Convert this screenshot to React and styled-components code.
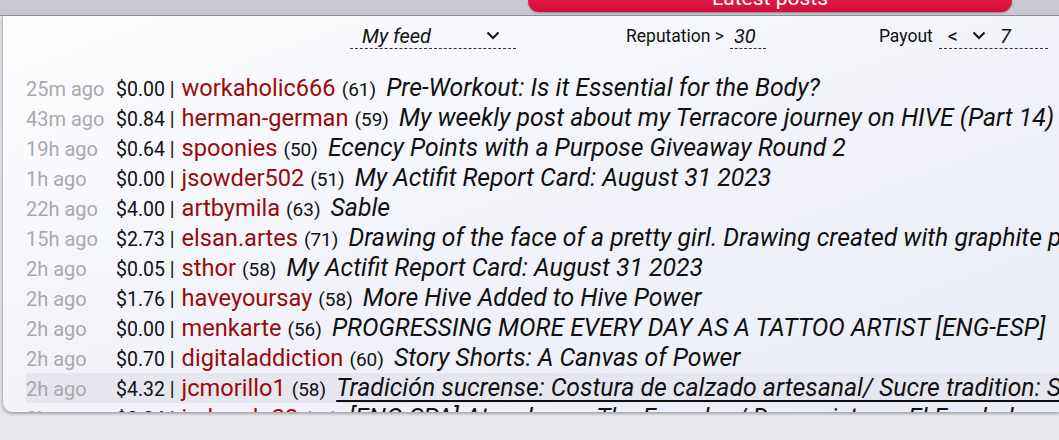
import React from "react";
import styled, { createGlobalStyle } from "styled-components";

const GlobalStyle = createGlobalStyle`
  html, body {
    margin: 0;
    padding: 0;
    background: #e9e9ef;
    font-family: Roboto, "Liberation Sans", sans-serif;
    overflow: hidden;
  }
`;

const Page = styled.div`
  width: 1059px;
  height: 440px;
  background: #e9e9ef;
`;

const TopBar = styled.div`
  height: 15px;
  background: #c9c9d2;
  border-bottom: 1px solid #8e8e98;
  display: flex;
  padding-left: 528px;
`;

const Tab = styled.div`
  width: 484px;
  height: 12px;
  background: linear-gradient(to bottom, #e3173f, #d0103a);
  border-radius: 0 0 11px 11px;
  overflow: hidden;
  display: flex;
  justify-content: center;
  color: #fff;
  font-size: 21px;
  line-height: 21px;
  box-shadow: 0 1px 2px rgba(0, 0, 0, 0.35);
  span {
    margin-top: -12px;
  }
`;

const Panel = styled.div`
  margin-left: 2px;
  height: 396px;
  border-left: 1px solid #b8b8c0;
  border-bottom-left-radius: 10px;
  background: linear-gradient(160deg, #fefeff 0%, #f3f4fa 45%, #eaecf6 100%);
  box-shadow: 0 2px 3px rgba(0, 0, 0, 0.3);
  overflow: hidden;
`;

const Filters = styled.div`
  height: 40px;
  display: flex;
  align-items: center;
  font-size: 17.5px;
  color: #111;
`;

const Select = styled.div`
  display: flex;
  align-items: center;
  justify-content: space-between;
  margin-left: ${(p) => p.offset}px;
  width: ${(p) => p.width}px;
  height: 26px;
  border-bottom: 1px dashed #333;
  padding: 0 ${(p) => p.padRight || 0}px 0 ${(p) => p.padLeft || 0}px;
  box-sizing: border-box;
  font-style: italic;
  font-size: 20px;
`;

const Label = styled.span`
  margin-left: ${(p) => p.offset}px;
  margin-right: 6px;
`;

const Chevron = () => (
  <svg width="14" height="9" viewBox="0 0 14 9">
    <path d="M1.5 1.5 L7 7 L12.5 1.5" fill="none" stroke="#111" strokeWidth="2" />
  </svg>
);

const PayoutInner = styled.div`
  display: flex;
  align-items: center;
  gap: 14px;
  font-style: normal;
  em {
    font-style: italic;
  }
`;

const List = styled.div`
  margin-top: 17px;
  padding-left: 23px;
`;

const Row = styled.div`
  display: flex;
  align-items: baseline;
  height: 30px;
  line-height: 30px;
  white-space: nowrap;
  background: ${(p) => (p.active ? "#e6e6ee" : "transparent")};
`;

const Time = styled.span`
  width: 90px;
  flex: none;
  color: #a9a9ad;
  font-size: 20px;
`;

const Price = styled.span`
  font-size: 19.5px;
  color: #111;
  margin-right: 7px;
`;

const User = styled.span`
  font-size: 23.6px;
  color: #990b0b;
  margin-right: 6px;
`;

const Rep = styled.span`
  font-size: 19px;
  color: #111;
  margin-right: 10px;
`;

const Title = styled.span`
  font-size: 24.8px;
  font-style: italic;
  color: #111;
  text-decoration: ${(p) => (p.active ? "underline" : "none")};
  text-underline-offset: 4px;
`;

const posts = [
  ["25m ago", "$0.00", "workaholic666", 61, "Pre-Workout: Is it Essential for the Body?"],
  ["43m ago", "$0.84", "herman-german", 59, "My weekly post about my Terracore journey on HIVE (Part 14)"],
  ["19h ago", "$0.64", "spoonies", 50, "Ecency Points with a Purpose Giveaway Round 2"],
  ["1h ago", "$0.00", "jsowder502", 51, "My Actifit Report Card: August 31 2023"],
  ["22h ago", "$4.00", "artbymila", 63, "Sable"],
  ["15h ago", "$2.73", "elsan.artes", 71, "Drawing of the face of a pretty girl. Drawing created with graphite pencil"],
  ["2h ago", "$0.05", "sthor", 58, "My Actifit Report Card: August 31 2023"],
  ["2h ago", "$1.76", "haveyoursay", 58, "More Hive Added to Hive Power"],
  ["2h ago", "$0.00", "menkarte", 56, "PROGRESSING MORE EVERY DAY AS A TATTOO ARTIST [ENG-ESP]"],
  ["2h ago", "$0.70", "digitaladdiction", 60, "Story Shorts: A Canvas of Power"],
  ["2h ago", "$4.32", "jcmorillo1", 58, "Tradición sucrense: Costura de calzado artesanal/ Sucre tradition: Shoe sewing", true],
  ["2h ago", "$0.24", "jedvardo22", 58, "[ENG-SPA] At a glance: The Founder / De un vistazo: El Fundador"],
];

export default function App() {
  return (
    <Page>
      <GlobalStyle />
      <TopBar>
        <Tab>
          <span>Latest posts</span>
        </Tab>
      </TopBar>
      <Panel>
        <Filters>
          <Select offset={347} width={166} padLeft={12} padRight={16}>
            <span>My feed</span>
            <Chevron />
          </Select>
          <Label offset={110}>Reputation &gt;</Label>
          <Select offset={0} width={36} padLeft={4}>
            <span>30</span>
          </Select>
          <Label offset={113}>Payout</Label>
          <Select offset={0} width={109} padLeft={9}>
            <PayoutInner>
              <span>&lt;</span>
              <Chevron />
              <em>7</em>
            </PayoutInner>
          </Select>
        </Filters>
        <List>
          {posts.map(([time, price, user, rep, title, active], i) => (
            <Row key={i} active={active}>
              <Time>{time}</Time>
              <Price>{price} |</Price>
              <User>{user}</User>
              <Rep>({rep})</Rep>
              <Title active={active}>{title}</Title>
            </Row>
          ))}
        </List>
      </Panel>
    </Page>
  );
}
